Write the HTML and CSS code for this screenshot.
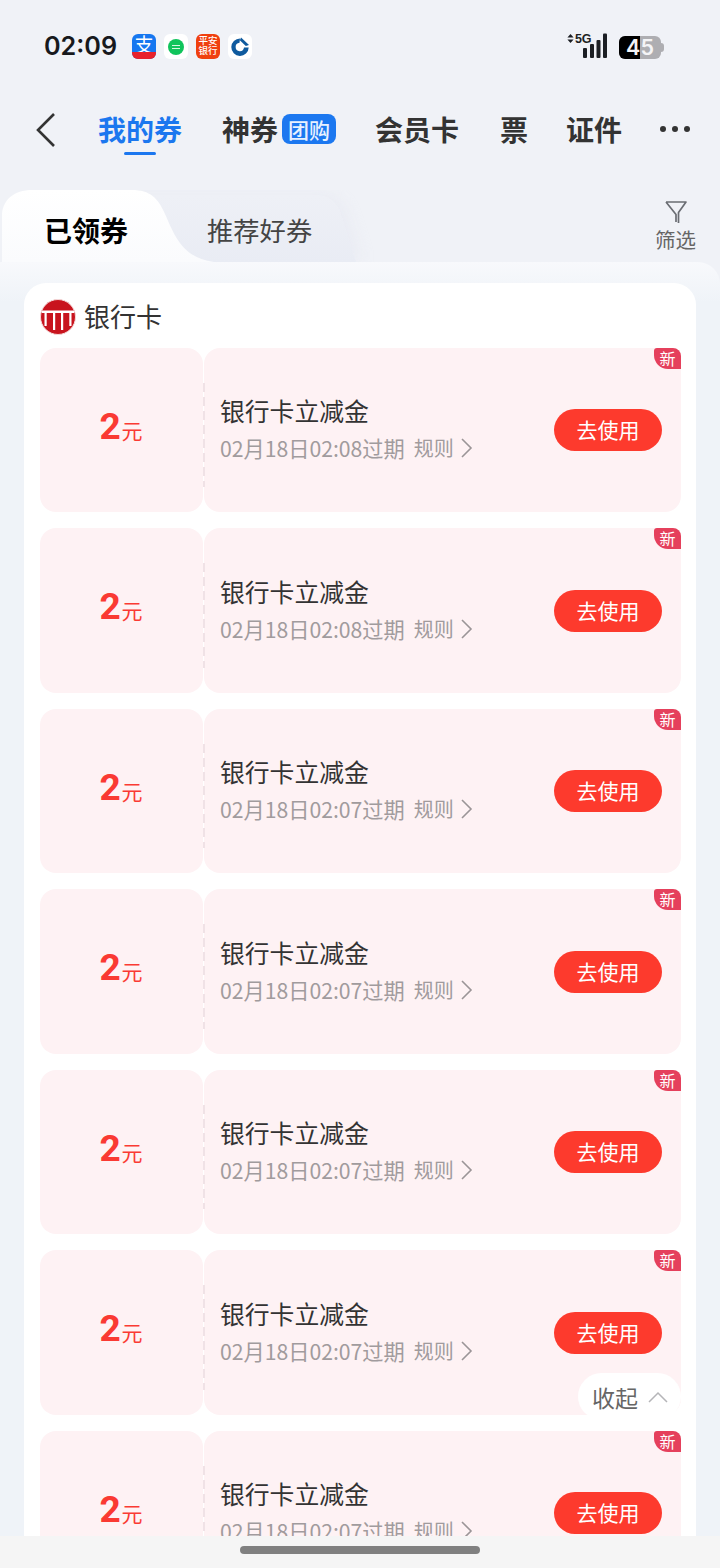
FILE: index.html
```html
<!DOCTYPE html>
<html lang="zh-CN">
<head>
<meta charset="utf-8">
<title>我的券</title>
<link rel="stylesheet" href="styles.css">
</head>
<body>
<div class="screen">
  <div class="status">
    <div class="time">02:09</div>
    <div class="apps">
      <div class="app alipay"><span class="ali-char">支</span><span class="ali-band"></span></div>
      <div class="app white"><span class="green-dot"><i></i><i></i></span></div>
      <div class="app pingan"><span>平安<br>银行</span></div>
      <div class="app white">
        <svg width="22" height="22" viewBox="0 0 22 22"><path d="M11 2.500A8.700 8.700 0 1 0 19.700 11.500H15A4.200 4.200 0 1 1 10.500 6.800Z" fill="#0f5a9e"/><path d="M12 1.500 20 9l-3.200 1L10.800 4.300Z" fill="#0f5a9e"/></svg>
      </div>
    </div>
    <div class="sys">
      <svg class="signal" width="42" height="26" viewBox="0 0 42 26">
        <path d="M4.500 1 7.600 4.400H1.400ZM4.500 10 1.400 6.600H7.600Z" fill="#1c1f24"/>
        <rect x="17" y="15" width="4" height="10" rx="1" fill="#1c1f24"/>
        <rect x="24" y="11" width="4" height="14" rx="1" fill="#1c1f24"/>
        <rect x="30.500" y="7" width="4" height="18" rx="1" fill="#1c1f24"/>
        <rect x="37" y="0.500" width="4" height="24.500" rx="1" fill="#1c1f24"/>
      </svg>
      <span class="five-g">5G</span>
      <div class="battery"><span class="batt-fill"></span><span class="batt-num">45</span><span class="batt-nub"></span></div>
    </div>
  </div>

  <nav class="nav">
    <svg class="back" width="22" height="36" viewBox="0 0 22 36"><path d="M19 2 3 18l16 16" fill="none" stroke="#333" stroke-width="2.600"/></svg>
    <div class="nav-item active">我的券<span class="underline"></span></div>
    <div class="nav-item shen">神券<span class="tuan">团购</span></div>
    <div class="nav-item hui">会员卡</div>
    <div class="nav-item piao">票</div>
    <div class="nav-item zheng">证件</div>
    <div class="dots"><i></i><i></i><i></i></div>
  </nav>

  <div class="tabs">
    <svg class="tabs-bg" width="380" height="72" viewBox="0 0 380 72">
      <defs>
        <linearGradient id="t2" x1="0" y1="0" x2="0" y2="1"><stop offset="0" stop-color="#eef0f6"/><stop offset="1" stop-color="#e9ecf4"/></linearGradient>
        <linearGradient id="t1" x1="0" y1="0" x2="0" y2="1"><stop offset="0" stop-color="#ffffff"/><stop offset="1" stop-color="#fafbfd"/></linearGradient>
      </defs>
      <path class="tab2-shape" d="M120 5H312C328 5 334 12 339 24L354 72H120Z" fill="url(#t2)"/>
      <path d="M0 72V26C0 10 12 0 30 0H130C148 0 156 8 163 24C172 44 180 68 212 72Z" fill="url(#t1)"/>
    </svg>
    <div class="tab tab-on">已领券</div>
    <div class="tab tab-off">推荐好券</div>
    <div class="filter">
      <svg width="24" height="24" viewBox="0 0 24 24"><path d="M2 2H22L14.500 12.500V23M12 22V14.500L2 2" fill="none" stroke="#6a6d73" stroke-width="1.700" stroke-linejoin="round"/></svg>
      <span>筛选</span>
    </div>
  </div>

  <main class="panel">
    <section class="card">
      <header class="card-head">
        <svg class="bank" width="36" height="36" viewBox="0 0 36 36">
          <circle cx="18" cy="18" r="17.500" fill="#c8141e" stroke="#f4d9d9" stroke-width="1"/>
          <rect x="2" y="11.500" width="32" height="2.500" fill="#fff"/>
          <rect x="4.500" y="14" width="2.200" height="13" fill="#fff"/>
          <rect x="13" y="14" width="2.200" height="17" fill="#fff"/>
          <rect x="21" y="14" width="2.200" height="17" fill="#fff"/>
          <rect x="29.300" y="14" width="2.200" height="13" fill="#fff"/>
        </svg>
        <span>银行卡</span>
      </header>

      <article class="coupon">
        <div class="amount"><b>2</b><span>元</span></div>
        <div class="detail">
          <div class="info"><div class="name">银行卡立减金</div><div class="sub"><span>02月18日02:08过期</span><span class="rule">规则</span><svg class="chev" width="13" height="22" viewBox="0 0 13 22"><path d="M2 2l9 9-9 9" fill="none" stroke="#9b9597" stroke-width="1.600"/></svg></div></div>
          <div class="use">去使用</div>
        </div>
        <div class="new">新</div>
      </article>
      <article class="coupon">
        <div class="amount"><b>2</b><span>元</span></div>
        <div class="detail">
          <div class="info"><div class="name">银行卡立减金</div><div class="sub"><span>02月18日02:08过期</span><span class="rule">规则</span><svg class="chev" width="13" height="22" viewBox="0 0 13 22"><path d="M2 2l9 9-9 9" fill="none" stroke="#9b9597" stroke-width="1.600"/></svg></div></div>
          <div class="use">去使用</div>
        </div>
        <div class="new">新</div>
      </article>
      <article class="coupon">
        <div class="amount"><b>2</b><span>元</span></div>
        <div class="detail">
          <div class="info"><div class="name">银行卡立减金</div><div class="sub"><span>02月18日02:07过期</span><span class="rule">规则</span><svg class="chev" width="13" height="22" viewBox="0 0 13 22"><path d="M2 2l9 9-9 9" fill="none" stroke="#9b9597" stroke-width="1.600"/></svg></div></div>
          <div class="use">去使用</div>
        </div>
        <div class="new">新</div>
      </article>
      <article class="coupon">
        <div class="amount"><b>2</b><span>元</span></div>
        <div class="detail">
          <div class="info"><div class="name">银行卡立减金</div><div class="sub"><span>02月18日02:07过期</span><span class="rule">规则</span><svg class="chev" width="13" height="22" viewBox="0 0 13 22"><path d="M2 2l9 9-9 9" fill="none" stroke="#9b9597" stroke-width="1.600"/></svg></div></div>
          <div class="use">去使用</div>
        </div>
        <div class="new">新</div>
      </article>
      <article class="coupon">
        <div class="amount"><b>2</b><span>元</span></div>
        <div class="detail">
          <div class="info"><div class="name">银行卡立减金</div><div class="sub"><span>02月18日02:07过期</span><span class="rule">规则</span><svg class="chev" width="13" height="22" viewBox="0 0 13 22"><path d="M2 2l9 9-9 9" fill="none" stroke="#9b9597" stroke-width="1.600"/></svg></div></div>
          <div class="use">去使用</div>
        </div>
        <div class="new">新</div>
      </article>
      <article class="coupon">
        <div class="amount"><b>2</b><span>元</span></div>
        <div class="detail">
          <div class="info"><div class="name">银行卡立减金</div><div class="sub"><span>02月18日02:07过期</span><span class="rule">规则</span><svg class="chev" width="13" height="22" viewBox="0 0 13 22"><path d="M2 2l9 9-9 9" fill="none" stroke="#9b9597" stroke-width="1.600"/></svg></div></div>
          <div class="use">去使用</div>
        </div>
        <div class="new">新</div>
      </article>
      <article class="coupon">
        <div class="amount"><b>2</b><span>元</span></div>
        <div class="detail">
          <div class="info"><div class="name">银行卡立减金</div><div class="sub"><span>02月18日02:07过期</span><span class="rule">规则</span><svg class="chev" width="13" height="22" viewBox="0 0 13 22"><path d="M2 2l9 9-9 9" fill="none" stroke="#9b9597" stroke-width="1.600"/></svg></div></div>
          <div class="use">去使用</div>
        </div>
        <div class="new">新</div>
      </article>
    </section>
    <div class="collapse"><span>收起</span><svg width="20" height="12" viewBox="0 0 20 12"><path d="M1 11 10 2l9 9" fill="none" stroke="#b5b5b8" stroke-width="1.500"/></svg></div>
  </main>

  <footer class="home"><span class="indicator"></span></footer>
</div>
</body>
</html>
```

FILE: styles.css
```css
* { box-sizing: border-box; margin: 0; padding: 0; }
html, body { width: 720px; height: 1568px; overflow: hidden; }
body {
  background: #f0f2f7;
  font-family: "Noto Sans CJK SC", "Noto Sans", sans-serif;
  color: #333;
}
.screen { width: 720px; height: 1568px; display: flex; flex-direction: column; overflow: hidden; }

/* status bar */
.status { height: 92px; flex: none; display: flex; align-items: flex-start; padding: 30px 59px 0 44px; }
.time { font-family: Inter, "Liberation Sans", sans-serif; font-size: 25.200px; font-weight: 600; line-height: 32px; color: #17191d; width: 88px; }
.apps { display: flex; gap: 8px; margin-top: 4px; }
.app { width: 24px; height: 25px; border-radius: 6px; display: flex; align-items: center; justify-content: center; position: relative; }
.white { background: #fff; }
.alipay { background: #1677f0; align-items: flex-start; }
.ali-char { color: #fff; font-size: 19px; line-height: 19px; }
.ali-band { position: absolute; left: 0; right: 0; bottom: 0; height: 7px; background: #e8222c; border-radius: 0 0 6px 6px; }
.green-dot { width: 16px; height: 16px; border-radius: 50%; background: #10c45c; display: flex; flex-direction: column; align-items: center; justify-content: center; gap: 2px; }
.green-dot i { display: block; width: 8px; height: 1px; background: #d6f7e2; }
.pingan { background: #f0400f; color: #fff; font-size: 9.500px; line-height: 10px; font-weight: 500; padding-bottom: 3px; text-align: center; }
.sys { margin-left: auto; display: flex; align-items: flex-start; position: relative; margin-top: 3px; }
.signal { display: block; }
.five-g { position: absolute; left: 9px; top: -1px; font-family: "Liberation Sans", sans-serif; font-size: 12.500px; line-height: 14px; font-weight: 700; color: #1c1f24; letter-spacing: -0.300px; }
.battery { position: relative; width: 42px; height: 23px; margin-left: 11px; margin-top: 3px; background: #aeaeb2; border-radius: 6px; }
.batt-fill { position: absolute; left: 0; top: 0; bottom: 0; width: 21px; background: #000; border-radius: 6px 0 0 6px; }
.batt-num { position: absolute; left: 0; right: 0; top: 0; text-align: center; font-family: Inter, "Liberation Sans", sans-serif; font-size: 21.500px; line-height: 23px; font-weight: 600; color: #f4f4f6; }
.batt-nub { position: absolute; right: -3px; top: 7px; width: 3px; height: 9px; border-radius: 0 3px 3px 0; background: #aeaeb2; }

/* nav */
.nav { height: 76px; flex: none; position: relative; display: flex; align-items: center; padding-left: 35px; }
.back { display: block; flex: none; margin-right: 41px; margin-top: -1px; }
.nav-item { font-size: 28px; font-weight: 700; line-height: 40px; color: #333; position: relative; white-space: nowrap; margin-top: -2px; }
.active { color: #1b77ef; }
.underline { position: absolute; left: 26px; bottom: -6px; width: 32px; height: 3px; border-radius: 2px; background: #1b77ef; }
.shen { margin-left: 40px; display: flex; align-items: center; }
.tuan { margin-left: 4px; width: 54px; height: 30px; background: #1c78f0; border-radius: 8px; color: #e8f1ff; font-size: 21px; line-height: 30px; font-weight: 500; text-align: center; }
.hui { margin-left: 39px; }
.piao { margin-left: 41px; }
.zheng { margin-left: 38px; }
.dots { display: flex; gap: 6px; margin-left: 38px; margin-top: -2px; }
.dots i { display: block; width: 6px; height: 6px; border-radius: 50%; background: #333; }

/* tabs */
.tabs { height: 94px; flex: none; position: relative; margin-top: 22px; display: flex; align-items: flex-start; }
.tabs-bg { position: absolute; left: 2px; top: 0; display: block; }
.tab2-shape { filter: drop-shadow(5px 0 8px rgba(222, 226, 238, .4)); }
.tab { position: relative; line-height: 40px; margin-top: 20px; white-space: nowrap; }
.tab-on { margin-left: 44px; font-size: 28px; font-weight: 700; color: #000; }
.tab-off { margin-left: 79px; font-size: 26.300px; color: #444; }
.filter { margin-left: auto; margin-right: 24px; display: flex; flex-direction: column; align-items: center; position: relative; margin-top: 10px; }
.filter svg { display: block; }
.filter span { font-size: 20.500px; line-height: 26px; color: #666; margin-top: 2px; }

/* content */
.panel { flex: 1; min-height: 0; margin-top: -22px; border-radius: 0 22px 0 0; background: linear-gradient(#f8f9fc 0, #eff3f8 40px); padding: 21px 24px 0; overflow: hidden; position: relative; }
.card { background: #fff; border-radius: 22px 22px 0 0; padding: 0 15px 0 16px; }
.card-head { height: 64.900px; display: flex; align-items: center; gap: 8px; font-size: 26px; color: #333; }
.bank { display: block; flex: none; margin-top: 3px; }
.coupon { height: 164.500px; margin-bottom: 16px; display: flex; position: relative; }
.amount { width: 163px; flex: none; background: #fef2f4; border-radius: 16px; display: flex; align-items: baseline; justify-content: center; padding-top: 55px; color: #fa3a33; padding-right: 1px; }
.amount b { font-family: Roboto, "Liberation Sans", sans-serif; font-size: 37px; font-weight: 700; line-height: 48px; }
.amount span { font-size: 21px; margin-left: 1px; }
.detail { flex: 1; background: #fef2f4; border-radius: 16px; margin-left: 1px; display: flex; align-items: center; justify-content: space-between; padding: 0 19px 0 16px; position: relative; }
.detail::before { content: ""; position: absolute; left: -1.500px; top: 35px; bottom: 25px; width: 2px; background: repeating-linear-gradient(#f0e2e6 0 9px, transparent 9px 14px); }
.info { padding-bottom: 5px; }
.name { font-size: 24.800px; line-height: 36px; color: #333; }
.sub { display: flex; align-items: center; font-size: 21.200px; line-height: 30px; color: #a19b9d; margin-top: 5px; white-space: nowrap; }
.rule { margin-left: 9px; font-size: 20px; }
.chev { display: block; margin-left: 6px; }
.use { width: 108px; height: 42px; border-radius: 21px; background: #fd3a2d; color: #fff; font-size: 21px; line-height: 40px; text-align: center; }
.new { position: absolute; right: 0; top: 0; width: 27px; height: 21px; background: #e5405c; border-radius: 3px 8px 0 14px; color: #fff; font-size: 16px; line-height: 20px; text-align: center; }
.collapse { position: absolute; right: 39px; bottom: 116px; width: 103px; height: 47px; border-radius: 24px; background: #fff; display: flex; align-items: center; gap: 10px; padding-left: 14px; font-size: 23px; color: #666; }
.collapse svg { display: block; }

/* home bar */
.home { height: 32px; flex: none; background: #f5f5f5; display: flex; justify-content: center; padding-top: 10px; }
.indicator { display: block; width: 240px; height: 8px; border-radius: 4px; background: #808080; }
```
